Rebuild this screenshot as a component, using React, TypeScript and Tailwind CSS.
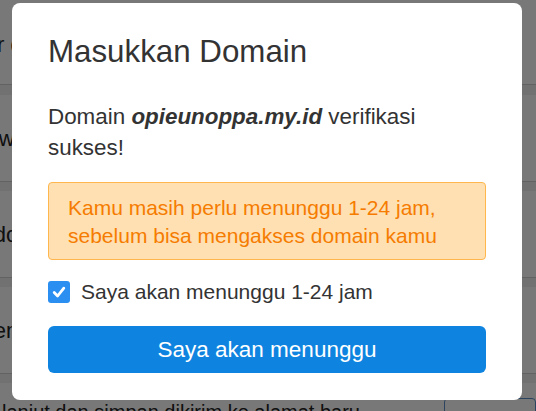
import React from "react";

const font = { fontFamily: '"Liberation Sans", Arial, sans-serif' };

function CheckIcon() {
  return (
    <svg viewBox="0 0 22 22" className="h-[22px] w-[22px]">
      <path
        d="M6.2 11.6 L9.6 15 L15.8 7.2"
        fill="none"
        stroke="#fff"
        strokeWidth="2.8"
        strokeLinecap="round"
        strokeLinejoin="round"
      />
    </svg>
  );
}

function PageRow({ label }: { label: string }) {
  return (
    <div className="flex h-[96px] flex-col">
      <div className="flex flex-1 items-center overflow-hidden">
        <span className="-ml-[38px] whitespace-nowrap text-[22px] text-[#222]">{label}</span>
      </div>
      <div className="h-[1px] bg-[#d0d0d0]" />
      <div className="h-[9px] bg-[#f0f0f0]" />
    </div>
  );
}

export default function App() {
  return (
    <div className="relative h-[411px] w-[536px] overflow-hidden bg-white" style={font}>
      {/* page behind the dialog */}
      <div className="flex flex-col">
        <div className="flex h-[84px] items-center overflow-hidden">
          <span className="-ml-[36px] mt-[4px] whitespace-nowrap text-[22px] text-[#222]">Atur domain</span>
        </div>
        <div className="h-[1px] bg-[#d0d0d0]" />
        <div className="h-[10px] bg-[#f0f0f0]" />
        <PageRow label="Pw web" />
        <PageRow label="Pk domain" />
        <PageRow label="Pk email" />
        <div className="flex items-start gap-[8px] pt-[14px]">
          <span className="whitespace-nowrap pl-[2px] text-[20px] text-[#222]">lanjut dan simpan dikirim ke alamat baru</span>
          <div className="ml-auto mt-[1px] h-[36px] w-[92px] rounded-[4px] border border-[#5b8fc9]" />
        </div>
      </div>

      {/* dim backdrop */}
      <div className="absolute inset-0 bg-black/[0.53]" />

      {/* dialog */}
      <div className="absolute left-[12px] top-[3px] h-[397px] w-[510px] rounded-[8px] bg-white px-[36px] pt-[31px]">
        <h4 className="text-[31.3px] leading-[36px] text-[#333]">Masukkan Domain</h4>
        <p className="mt-[31px] text-[22.4px] leading-[31px] text-[#333]">
          Domain <b className="font-bold italic">opieunoppa.my.id</b> verifikasi sukses!
        </p>
        <div className="mt-[19px] h-[78px] rounded-[4px] border border-[#ffb74d] bg-[#ffe0b2] px-[19px] pt-[11px] text-[21px] leading-[28px] text-[#f57c00]">
          Kamu masih perlu menunggu 1-24 jam,
          <br />
          sebelum bisa mengakses domain kamu
        </div>
        <label className="mt-[21px] flex h-[22px] items-center gap-[11px]">
          <span className="flex h-[22px] w-[22px] items-center justify-center rounded-[3px] bg-[#2a8ff0]">
            <CheckIcon />
          </span>
          <span className="text-[21px] leading-[22px] text-[#333]">Saya akan menunggu 1-24 jam</span>
        </label>
        <button className="mt-[23px] flex h-[47px] w-full items-center justify-center rounded-[6px] bg-[#0e84e0] text-[22.5px] text-white">
          Saya akan menunggu
        </button>
      </div>
    </div>
  );
}
